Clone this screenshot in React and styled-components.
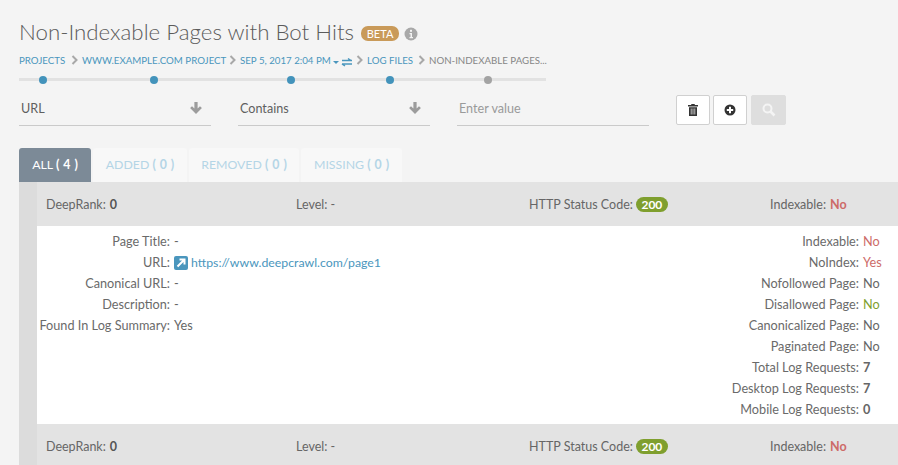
import { createGlobalStyle } from "styled-components";
import styled from "styled-components";

const GlobalStyle = createGlobalStyle`
  html, body { margin: 0; padding: 0; background: #f4f4f4; height: 100%; overflow: hidden; }
  body { font-family: Lato, "Open Sans", sans-serif; color: #5f5f5f; }
`;

const Page = styled.div`
  width: 898px;
  height: 465px;
  overflow: hidden;
  padding-top: 18px;
  box-sizing: border-box;
`;

const TitleRow = styled.div`
  display: flex;
  align-items: center;
  padding-left: 19px;
  height: 28px;
`;

const Title = styled.h1`
  margin: 0;
  font-size: 22.3px;
  font-weight: 300;
  color: #5b5b5b;
  line-height: 28px;
  white-space: nowrap;
`;

const BetaBadge = styled.span`
  margin: 3px 0 0 7px;
  background: #c99a59;
  color: #fff;
  border-radius: 7px;
  font-size: 11px;
  line-height: 15px;
  height: 15px;
  width: 38px;
  text-align: center;
`;

const InfoIcon = styled.svg`
  margin: 3px 0 0 5px;
  width: 14px;
  height: 14px;
`;

const Crumbs = styled.nav`
  position: relative;
  display: flex;
  width: 527px;
  margin: 8px 0 0 19px;
  height: 29px;

  &::before {
    content: "";
    position: absolute;
    left: 0;
    right: 0;
    top: 24px;
    height: 3px;
    background: #e2e2e2;
  }
`;

const Crumb = styled.div`
  position: relative;
  width: ${p => p.$w}px;
  margin-right: ${p => p.$gap || 0}px;
  font-size: 9.7px;
  line-height: 13px;
  color: ${p => (p.$current ? "#868686" : "#4a96bd")};
  white-space: nowrap;
  text-transform: uppercase;
  display: flex;
  align-items: center;

  &::after {
    content: "";
    position: absolute;
    left: 50%;
    margin-left: -4px;
    top: 21.5px;
    width: 8px;
    height: 8px;
    border-radius: 50%;
    background: ${p => (p.$current ? "#a3a3a3" : "#4393bb")};
  }
`;

const CrumbText = styled.span`
  position: relative;
  top: -8px;
`;

const Chevron = styled.svg`
  position: absolute;
  right: ${p => p.$right}px;
  top: 1px;
  width: 7px;
  height: 10px;
`;

const CrumbExtras = styled.svg`
  position: absolute;
  left: 93px;
  top: 0px;
  width: 24px;
  height: 14px;
`;

const FilterRow = styled.div`
  display: flex;
  padding-left: 19px;
  margin-top: 12px;
  height: 31px;
`;

const Field = styled.div`
  margin-right: 27px;
  border-bottom: 1px solid #cacaca;
  display: flex;
  align-items: center;
  justify-content: space-between;
  padding: 0 8px 4px 2px;
  width: 182px;
  height: 26px;
  font-size: 12.6px;
  color: ${p => (p.$placeholder ? "#9a9a9a" : "#5f5f5f")};
`;

const ArrowIcon = styled.svg`
  width: 14px;
  height: 14px;
`;

const Buttons = styled.div`
  display: flex;
  gap: 3px;
`;

const IconButton = styled.button`
  width: ${p => p.$w || 34}px;
  height: 30px;
  margin-left: ${p => p.$ml || 0}px;
  padding: 0;
  border-radius: 2px;
  border: 1px solid ${p => (p.$disabled ? "#dedede" : "#d0d0d0")};
  background: ${p => (p.$disabled ? "#dedede" : "#fff")};
  display: flex;
  align-items: center;
  justify-content: center;
`;

const Tabs = styled.div`
  display: flex;
  gap: 2px;
  padding-left: 19px;
  margin-top: 22px;
  height: 34px;
`;

const Tab = styled.div`
  width: ${p => p.$w}px;
  border-radius: 3px 3px 0 0;
  background: ${p => (p.$active ? "#7c8a97" : "#f8f8f8")};
  color: ${p => (p.$active ? "#fff" : "#b4d5e6")};
  font-size: 12.3px;
  line-height: 34px;
  text-align: center;
  white-space: nowrap;

  b {
    font-weight: 700;
    word-spacing: 1px;
  }
`;

const Table = styled.div`
  margin-left: 19px;
  border-left: 18px solid #dcdcdc;
`;

const RowHead = styled.div`
  display: grid;
  grid-template-columns: 250px 233px 241px 1fr;
  align-items: center;
  height: 44px;
  padding-left: 9px;
  background: #e3e3e3;
  font-size: 12.5px;
  color: #666;
`;

const HeadCell = styled.div`
  display: flex;
  align-items: center;
  gap: ${p => p.$gap || 4}px;
  white-space: nowrap;
`;

const Strong = styled.b`
  font-weight: 700;
  color: ${p => p.$color || "#555"};
`;

const StatusPill = styled.span`
  background: #7f9f2e;
  color: #fff;
  font-size: 12px;
  font-weight: 700;
  line-height: 15px;
  width: 32px;
  text-align: center;
  border-radius: 8px;
`;

const Details = styled.div`
  display: flex;
  justify-content: space-between;
  height: 198px;
  padding-top: 5px;
  box-sizing: border-box;
  background: #fff;
`;

const DetailCol = styled.div`
  display: grid;
  grid-template-columns: ${p => p.$cols};
  grid-auto-rows: 21px;
  column-gap: 4px;
  font-size: 12.7px;
  line-height: 21px;
  white-space: nowrap;
`;

const Label = styled.div`
  text-align: right;
  color: #6a6a6a;
`;

const Value = styled.div`
  color: ${p => p.$color || "#666"};
  font-weight: ${p => (p.$bold ? 700 : 400)};
  display: flex;
  align-items: center;
  gap: 3px;
`;

const LinkIcon = styled.svg`
  width: 14px;
  height: 14px;
`;

const UrlLink = styled.a`
  color: #4a96bd;
  font-size: 12.3px;
`;

const RED = "#cd6b68";
const GREEN = "#7f9f2e";

const Arrow = () => (
  <ArrowIcon viewBox="0 0 13 13">
    <path d="M5 1h3v6l2.200-2.200 1.800 1.800-5.500 5.500L1 6.600 2.800 4.800 5 7z" fill="#9c9c9c" />
  </ArrowIcon>
);

const Head = () => (
  <RowHead>
    <HeadCell>DeepRank: <Strong>0</Strong></HeadCell>
    <HeadCell>Level: -</HeadCell>
    <HeadCell $gap={3}>HTTP Status Code: <StatusPill>200</StatusPill></HeadCell>
    <HeadCell>Indexable: <Strong $color={RED}>No</Strong></HeadCell>
  </RowHead>
);

const chevron = right => (
  <Chevron $right={right} viewBox="0 0 7 10">
    <path d="M1.500 1l4 4-4 4" fill="none" stroke="#a8a8a8" strokeWidth="2" />
  </Chevron>
);

export default function App() {
  return (
    <Page>
      <GlobalStyle />
      <TitleRow>
        <Title>Non-Indexable Pages with Bot Hits</Title>
        <BetaBadge>BETA</BetaBadge>
        <InfoIcon viewBox="0 0 14 14">
          <circle cx="7" cy="7" r="6.500" fill="#a8a8a8" />
          <rect x="6" y="2.800" width="2" height="2" fill="#f4f4f4" />
          <path d="M5.500 6h2.500v4h1v1.200H5.500V10h1V7.200h-1z" fill="#f4f4f4" />
        </InfoIcon>
      </TitleRow>
      <Crumbs>
        <Crumb $w={48} $gap={15}><CrumbText>Projects</CrumbText>{chevron(-11)}</Crumb>
        <Crumb $w={143} $gap={15}><CrumbText>www.example.com Project</CrumbText>{chevron(-11)}</Crumb>
        <Crumb $w={101} $gap={26}>
          <CrumbText>Sep 5, 2017 2:04 PM</CrumbText>
          <CrumbExtras viewBox="0 0 24 14">
            <path d="M0 7h6L3 10z" fill="#4a96bd" />
            <path d="M9 6.500h10M15 4.500l3 2M9 10h10M9 10l3 2" fill="none" stroke="#4a96bd" strokeWidth="1.500" />
          </CrumbExtras>
          {chevron(-22)}
        </Crumb>
        <Crumb $w={46} $gap={16}><CrumbText>Log Files</CrumbText>{chevron(-12)}</Crumb>
        <Crumb $w={117} $current><CrumbText>Non-Indexable Pages...</CrumbText></Crumb>
      </Crumbs>
      <FilterRow>
        <Field>URL<Arrow /></Field>
        <Field>Contains<Arrow /></Field>
        <Field $placeholder>Enter value</Field>
        <Buttons>
          <IconButton>
            <svg width="10" height="12" viewBox="0 0 10 12">
              <path d="M3.500 0h3l.5 1h3v1.500H0V1h3zM1 3.200h8V12H1z" fill="#333" />
              <path d="M3.200 4.500v6M5 4.500v6M6.800 4.500v6" stroke="#fff" strokeWidth=".7" />
            </svg>
          </IconButton>
          <IconButton>
            <svg width="12" height="12" viewBox="0 0 12 12">
              <circle cx="6" cy="6" r="5.500" fill="#333" />
              <path d="M2.800 6h6.400M6 2.800v6.400" stroke="#fff" strokeWidth="2" />
            </svg>
          </IconButton>
          <IconButton $w={35} $ml={1} $disabled>
            <svg width="14" height="14" viewBox="0 0 14 14">
              <circle cx="5.500" cy="5.500" r="4" fill="none" stroke="#f4f4f4" strokeWidth="2" />
              <path d="M8.500 8.500l4 4" stroke="#f4f4f4" strokeWidth="2.500" />
            </svg>
          </IconButton>
        </Buttons>
      </FilterRow>
      <Tabs>
        <Tab $w={72} $active>ALL <b>( 4 )</b></Tab>
        <Tab $w={94}>ADDED <b>( 0 )</b></Tab>
        <Tab $w={110}>REMOVED <b>( 0 )</b></Tab>
        <Tab $w={101}>MISSING <b>( 0 )</b></Tab>
      </Tabs>
      <Table>
        <Head />
        <Details>
          <DetailCol $cols="133px auto">
            <Label>Page Title:</Label><Value>-</Value>
            <Label>URL:</Label>
            <Value>
              <LinkIcon viewBox="0 0 14 14">
                <rect width="14" height="14" rx="2" fill="#4a96bd" />
                <path d="M3.500 10.500L9.500 4.500M5.500 3.500h5v5" fill="none" stroke="#fff" strokeWidth="2" />
              </LinkIcon>
              <UrlLink>https://www.deepcrawl.com/page1</UrlLink>
            </Value>
            <Label>Canonical URL:</Label><Value>-</Value>
            <Label>Description:</Label><Value>-</Value>
            <Label>Found In Log Summary:</Label><Value>Yes</Value>
          </DetailCol>
          <DetailCol $cols="auto 35px">
            <Label>Indexable:</Label><Value $color={RED}>No</Value>
            <Label>NoIndex:</Label><Value $color={RED}>Yes</Value>
            <Label>Nofollowed Page:</Label><Value>No</Value>
            <Label>Disallowed Page:</Label><Value $color={GREEN}>No</Value>
            <Label>Canonicalized Page:</Label><Value>No</Value>
            <Label>Paginated Page:</Label><Value>No</Value>
            <Label>Total Log Requests:</Label><Value $bold>7</Value>
            <Label>Desktop Log Requests:</Label><Value $bold>7</Value>
            <Label>Mobile Log Requests:</Label><Value $bold>0</Value>
          </DetailCol>
        </Details>
        <Head />
      </Table>
    </Page>
  );
}
